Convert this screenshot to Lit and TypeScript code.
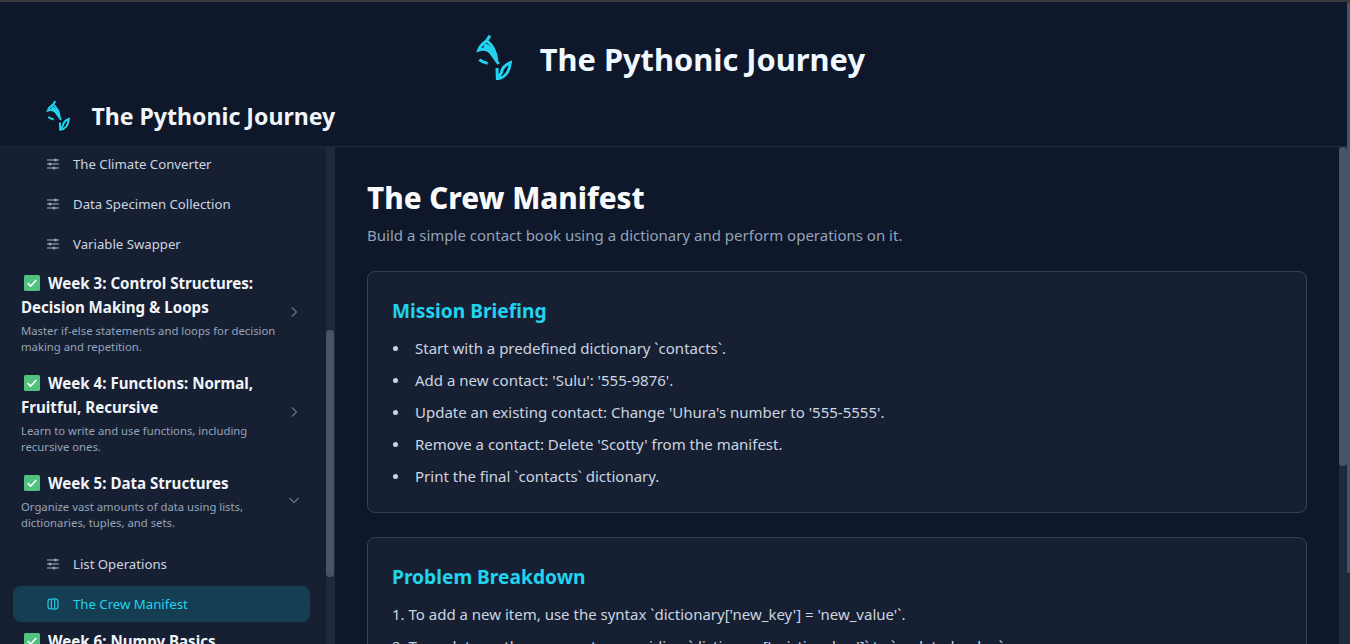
import { LitElement, html, css } from "lit";
import { customElement } from "lit/decorators.js";

const logo = (cls: string) => html`<svg class=${cls} viewBox="50 40 110 140" fill="none" stroke="#22d3ee" stroke-width="9">
  <path d="M92 45 L82 60 C70 68 62 76 58 88 C74 82 90 88 100 104 L118 130" />
  <path d="M82 60 C100 74 110 94 112 118" />
  <path d="M74 74 C86 78 98 90 106 108" stroke-width="14" />
  <path d="M60 117 C68 124 76 126 85 128" />
  <path d="M113 142 L114 174 C135 172 150 155 153 126 C138 132 128 142 126 156 L116 172" />
</svg>`;

const sliders = html`<svg class="ico" viewBox="0 0 14 14" fill="none" stroke="#a3afbf" stroke-width="1.2">
  <path d="M1 3H13M1 7H13M1 11H13" />
  <circle cx="9.5" cy="3" r="1.5" fill="#94a3b8" stroke="none" />
  <circle cx="4" cy="7" r="1.5" fill="#94a3b8" stroke="none" />
  <circle cx="8" cy="11" r="1.5" fill="#94a3b8" stroke="none" />
</svg>`;

const columns = html`<svg class="ico" viewBox="0 0 14 14" fill="none" stroke="#22d3ee" stroke-width="1.1">
  <rect x="2" y="2" width="10" height="10" rx="2.5" />
  <path d="M5.4 2V12M8.6 2V12" />
</svg>`;

const check = html`<svg class="check" viewBox="0 0 16 16">
  <rect width="16" height="16" rx="1.5" fill="#4fc27f" />
  <path d="M3.6 8.2 L6.6 11 L12.4 5" fill="none" stroke="#fff" stroke-width="1.7" />
</svg>`;

const chevRight = html`<svg class="chev" viewBox="0 0 16 16" fill="none" stroke="#64748b" stroke-width="1.2"><path d="M6 3.5L10.5 8L6 12.5" /></svg>`;
const chevDown = html`<svg class="chev" viewBox="0 0 16 16" fill="none" stroke="#64748b" stroke-width="1.2"><path d="M3.5 6L8 10.5L12.5 6" /></svg>`;

@customElement("app-root")
export class AppRoot extends LitElement {
  static styles = css`
    :host {
      display: flex;
      flex-direction: column;
      height: 644px;
      overflow: hidden;
      background: #0f172a;
      font-family: "Noto Sans", "Open Sans", sans-serif;
      color: #e2e8f0;
    }
    .chrome { height: 2px; background: #3a3a3c; flex: none; }
    .shell { flex: 1; min-height: 0; display: flex; }
    .page { flex: 1; min-width: 0; display: flex; flex-direction: column; }
    .outer { width: 3px; flex: none; background: #1e293b; }
    .outer .thumb { height: 571px; }
    header {
      flex: none;
      height: 145px;
      box-sizing: border-box;
      border-bottom: 1px solid #1e293b;
      display: flex;
      flex-direction: column;
    }
    .hero {
      height: 98px;
      padding: 16px 6px 0 0;
      box-sizing: border-box;
      display: flex;
      align-items: center;
      justify-content: center;
      gap: 27px;
      flex: none;
    }
    .hero h1 { margin: 0; font-size: 30.8px; font-weight: 700; color: #f0f9ff; line-height: 40px; }
    .bar { display: flex; align-items: center; gap: 21px; padding: 0 0 17px 46px; flex: 1; }
    .bar h2 { margin: 0; font-size: 23.1px; font-weight: 700; color: #f1f5f9; line-height: 32px; }
    .logo-l { width: 36.7px; height: 46.7px; margin-bottom: 4px; }
    .logo-s { width: 24.4px; height: 31px; margin-bottom: 1px; }
    .body { flex: 1; display: flex; min-height: 0; }
    aside {
      width: 335px;
      flex: none;
      box-sizing: border-box;
      background: #172033;
      border-right: 1px solid #1e293b;
      overflow: hidden;
      display: flex;
    }
    .nav { flex: 1; min-width: 0; padding: 0 16px 0 13px; }
    .item {
      height: 36px;
      margin-bottom: 4px;
      display: flex;
      align-items: center;
      gap: 13px;
      padding-left: 33px;
      border-radius: 8px;
      font-size: 13.2px;
      color: #cbd5e1;
    }
    .item.first { margin-top: -1px; }
    .item.active { background: #153e52; color: #22d3ee; }
    .ico { width: 14px; height: 14px; flex: none; }
    .week {
      display: flex;
      align-items: center;
      padding: 0 8px;
      margin: 9px 0 16px;
    }
    .week + .week { margin-top: 0; }
    .week.open { margin-bottom: 15px; }
    .week.next { margin-top: 7px; }
    .week .txt { flex: 1; min-width: 0; }
    .week h3 { margin: 0; font-size: 15.1px; line-height: 24px; font-weight: 700; color: #f1f5f9; }
    .week p { margin: 4px 0 0; font-size: 11.3px; line-height: 16px; color: #94a3b8; }
    .check { width: 16px; height: 16px; vertical-align: -2px; margin: 0 8px 0 3px; }
    .chev { width: 16px; height: 16px; flex: none; margin: 0 0 2px 8px; }
    .track { width: 8px; flex: none; background: #1e293b; }
    .thumb { background: #475569; border-radius: 4px; }
    .track.side .thumb { height: 247px; margin-top: 183px; }
    .track.main-bar .thumb { height: 319px; }
    main {
      flex: 1;
      min-width: 0;
      padding: 32px 32px 0 32px;
      overflow: hidden;
    }
    main h1 { margin: 0; padding-top: 2px; font-size: 29.5px; line-height: 34px; font-weight: 800; color: #f8fafc; }
    .sub { margin: 8px 0 24px; font-size: 15px; line-height: 24px; color: #94a3b8; }
    .card {
      background: #172033;
      border: 1px solid #334155;
      border-radius: 8px;
      padding: 24px;
      margin-bottom: 24px;
    }
    .card h2 { margin: 0 0 10px; font-size: 19.2px; line-height: 30px; font-weight: 700; color: #22d3ee; }
    ul { margin: 0; padding: 0; list-style: none; }
    li {
      display: flex;
      align-items: center;
      font-size: 15px;
      line-height: 24px;
      margin: 8px 0 0;
      color: #cbd5e1;
    }
    li:first-child { margin-top: 0; }
    li::before {
      content: "";
      width: 5px;
      height: 5px;
      border-radius: 50%;
      background: #cbd5e1;
      margin: 0 17px 0 1px;
      flex: none;
    }
    .step { font-size: 15px; line-height: 24px; margin: 0 0 8px; color: #cbd5e1; }
  `;

  render() {
    return html`
      <div class="chrome"></div>
      <div class="shell">
        <div class="page">
          <header>
            <div class="hero">${logo("logo-l")}<h1>The Pythonic Journey</h1></div>
            <div class="bar">${logo("logo-s")}<h2>The Pythonic Journey</h2></div>
          </header>
          <div class="body">
            <aside>
              <div class="nav">
                <div class="item first">${sliders}The Climate Converter</div>
                <div class="item">${sliders}Data Specimen Collection</div>
                <div class="item">${sliders}Variable Swapper</div>
                <div class="week"><div class="txt"><h3>${check}Week 3: Control Structures: Decision Making &amp; Loops</h3><p>Master if-else statements and loops for decision making and repetition.</p></div>${chevRight}</div>
                <div class="week"><div class="txt"><h3>${check}Week 4: Functions: Normal, Fruitful, Recursive</h3><p>Learn to write and use functions, including recursive ones.</p></div>${chevRight}</div>
                <div class="week open"><div class="txt"><h3>${check}Week 5: Data Structures</h3><p>Organize vast amounts of data using lists, dictionaries, tuples, and sets.</p></div>${chevDown}</div>
                <div class="item">${sliders}List Operations</div>
                <div class="item active">${columns}The Crew Manifest</div>
                <div class="week next"><div class="txt"><h3>${check}Week 6: Numpy Basics</h3></div></div>
              </div>
              <div class="track side"><div class="thumb"></div></div>
            </aside>
            <main>
              <h1>The Crew Manifest</h1>
              <p class="sub">Build a simple contact book using a dictionary and perform operations on it.</p>
              <section class="card">
                <h2>Mission Briefing</h2>
                <ul>
                  <li>Start with a predefined dictionary \`contacts\`.</li>
                  <li>Add a new contact: 'Sulu': '555-9876'.</li>
                  <li>Update an existing contact: Change 'Uhura's number to '555-5555'.</li>
                  <li>Remove a contact: Delete 'Scotty' from the manifest.</li>
                  <li>Print the final \`contacts\` dictionary.</li>
                </ul>
              </section>
              <section class="card">
                <h2>Problem Breakdown</h2>
                <div>
                  <p class="step">1. To add a new item, use the syntax \`dictionary['new_key'] = 'new_value'\`.</p>
                  <p class="step">2. To update an the same entry, providing \`dictionary['existing_key']\` to \`updated_value\`.</p>
                </div>
              </section>
            </main>
            <div class="track main-bar"><div class="thumb"></div></div>
          </div>
        </div>
        <div class="outer"><div class="thumb"></div></div>
      </div>
    `;
  }
}
